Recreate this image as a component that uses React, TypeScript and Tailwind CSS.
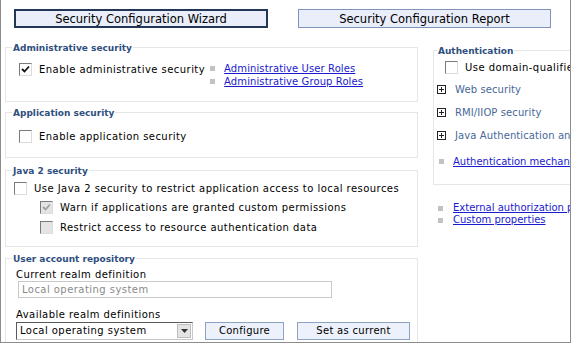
import type { ReactNode } from 'react';

const font = { fontFamily: '"DejaVu Sans", Verdana, sans-serif' };

function Check({ checked, disabled }: { checked?: boolean; disabled?: boolean }) {
  return (
    <span
      className={`inline-flex w-[13px] h-[13px] shrink-0 items-center justify-center border border-t-[#7a7a7a] border-l-[#7a7a7a] border-r-[#dcdcdc] border-b-[#dcdcdc] ${
        disabled ? 'bg-[#e4e4e4]' : 'bg-white'
      }`}
    >
      {checked && (
        <svg width="9" height="9" viewBox="0 0 9 9">
          <path d="M1 4 L3.5 6.5 L8 1.5" fill="none" stroke={disabled ? '#a0a0a0' : '#111'} strokeWidth="1.8" />
        </svg>
      )}
    </span>
  );
}

function Box({ title, className, children }: { title: string; className?: string; children: ReactNode }) {
  return (
    <fieldset className={`border border-[#e6e6e6] px-[6px] ${className ?? ''}`}>
      <legend className="px-[1px] text-[9px] leading-[11px] tracking-normal font-bold text-[#2f4f80]">
        <span className="relative top-[1px]">{title}</span>
      </legend>
      {children}
    </fieldset>
  );
}

function Bullet() {
  return <span className="inline-block w-[5px] h-[5px] bg-[#c2c2c2] shrink-0" />;
}

function Plus() {
  return (
    <span className="relative inline-block w-[9px] h-[9px] border border-[#222] shrink-0">
      <span className="absolute left-[1px] top-[3px] w-[5px] h-[1px] bg-[#222]" />
      <span className="absolute left-[3px] top-[1px] w-[1px] h-[5px] bg-[#222]" />
    </span>
  );
}

function Row({ checked, disabled, children, className }: { checked?: boolean; disabled?: boolean; children: ReactNode; className?: string }) {
  return (
    <div className={`flex items-center h-[13px] ${className ?? ''}`}>
      <Check checked={checked} disabled={disabled} />
      <span className="ml-[7px] whitespace-nowrap">{children}</span>
    </div>
  );
}

const btn = 'h-[18px] border border-[#8ea2c2] bg-[#ecf1fb] tracking-[0.3px] flex items-center justify-center';

export default function App() {
  return (
    <div
      className="w-[571px] h-[343px] overflow-hidden bg-white border-l border-r border-b border-[#8c8c8c] text-[10px] leading-[12px] tracking-[0.45px] text-black"
      style={font}
    >
      {/* top buttons */}
      <div className="flex pt-[9px]">
        <div className="ml-[13px] w-[254px] h-[19px] border-2 border-[#243656] bg-[#e9eefa] flex items-center justify-center text-[11.5px] tracking-normal">
          Security Configuration Wizard
        </div>
        <div className="ml-[30px] w-[253px] h-[19px] border border-[#7f93b8] bg-[#e9eefa] flex items-center justify-center text-[11.5px] tracking-normal">
          Security Configuration Report
        </div>
      </div>

      <div className="flex mt-[14px]">
        {/* left column */}
        <div className="ml-[4px] w-[413px] shrink-0 flex flex-col">
          <Box title="Administrative security" className="h-[60px]">
            <div className="flex mt-[10px] ml-[7px]">
              <Row checked>Enable administrative security</Row>
              <div className="ml-[5px] flex flex-col -mt-[1px] tracking-[0.1px]">
                {['Administrative User Roles', 'Administrative Group Roles'].map((l) => (
                  <div key={l} className="flex items-center gap-[9px] h-[13px]">
                    <Bullet />
                    <span className="text-[#1a1ad0] underline">{l}</span>
                  </div>
                ))}
              </div>
            </div>
          </Box>

          <Box title="Application security" className="h-[51px] mt-[5px]">
            <Row className="mt-[12px] ml-[7px]">Enable application security</Row>
          </Box>

          <Box title="Java 2 security" className="h-[82px] mt-[7px]">
            <Row className="mt-[6px] ml-[2px]">Use Java 2 security to restrict application access to local resources</Row>
            <Row checked disabled className="mt-[6px] ml-[28px]">Warn if applications are granted custom permissions</Row>
            <Row disabled className="mt-[7px] ml-[28px]">Restrict access to resource authentication data</Row>
          </Box>

          <Box title="User account repository" className="h-[100px] mt-[6px]">
            <div className="mt-[5px] ml-[4px]">Current realm definition</div>
            <div className="mt-[0px] ml-[6px] w-[314px] h-[17px] border border-[#c9c9c9] px-[3px] flex items-center text-[#8a8a8a]">
              Local operating system
            </div>
            <div className="mt-[11px] ml-[4px]">Available realm definitions</div>
            <div className="flex mt-[1px] ml-[4px] items-center">
              <div className="w-[177px] h-[18px] border border-t-[#5a5a5a] border-l-[#5a5a5a] border-r-[#c8c8c8] border-b-[#c8c8c8] flex items-center pl-[3px] pr-[1px]">
                <span className="flex-1">Local operating system</span>
                <span className="w-[14px] h-[14px] bg-[#e4e4e4] border border-[#bdbdbd] flex items-center justify-center">
                  <svg width="7" height="4" viewBox="0 0 7 4">
                    <path d="M0 0 H7 L3.5 4 Z" fill="#333" />
                  </svg>
                </span>
              </div>
              <div className={`${btn} ml-[12px] w-[79px]`}>Configure</div>
              <div className={`${btn} ml-[13px] w-[113px]`}>Set as current</div>
            </div>
          </Box>
        </div>

        {/* right column */}
        <div className="ml-[15px] w-[300px] shrink-0 flex flex-col">
          <Box title="Authentication" className="h-[140px] mt-[3px] pl-[3px]">
            <Row className="mt-[5px] ml-[8px]">Use domain-qualified user names</Row>
            {['Web security', 'RMI/IIOP security', 'Java Authentication and Authorization Service'].map((t, i) => (
              <div key={t} className={`flex items-center h-[13px] tracking-[0.1px] ${i === 0 ? 'mt-[9px]' : 'mt-[10px]'}`}>
                <Plus />
                <span className="ml-[9px] text-[#46689a] whitespace-nowrap">{t}</span>
              </div>
            ))}
            <div className="flex items-center h-[13px] mt-[13px] ml-[2px] tracking-normal">
              <Bullet />
              <span className="ml-[9px] text-[#1a1ad0] underline whitespace-nowrap">Authentication mechanisms and expiration</span>
            </div>
          </Box>
          <div className="mt-[17px] ml-[5px] flex flex-col tracking-normal">
            {['External authorization providers', 'Custom properties'].map((l) => (
              <div key={l} className="flex items-center h-[12px]">
                <Bullet />
                <span className="ml-[10px] text-[#1a1ad0] underline whitespace-nowrap">{l}</span>
              </div>
            ))}
          </div>
        </div>
      </div>
    </div>
  );
}
